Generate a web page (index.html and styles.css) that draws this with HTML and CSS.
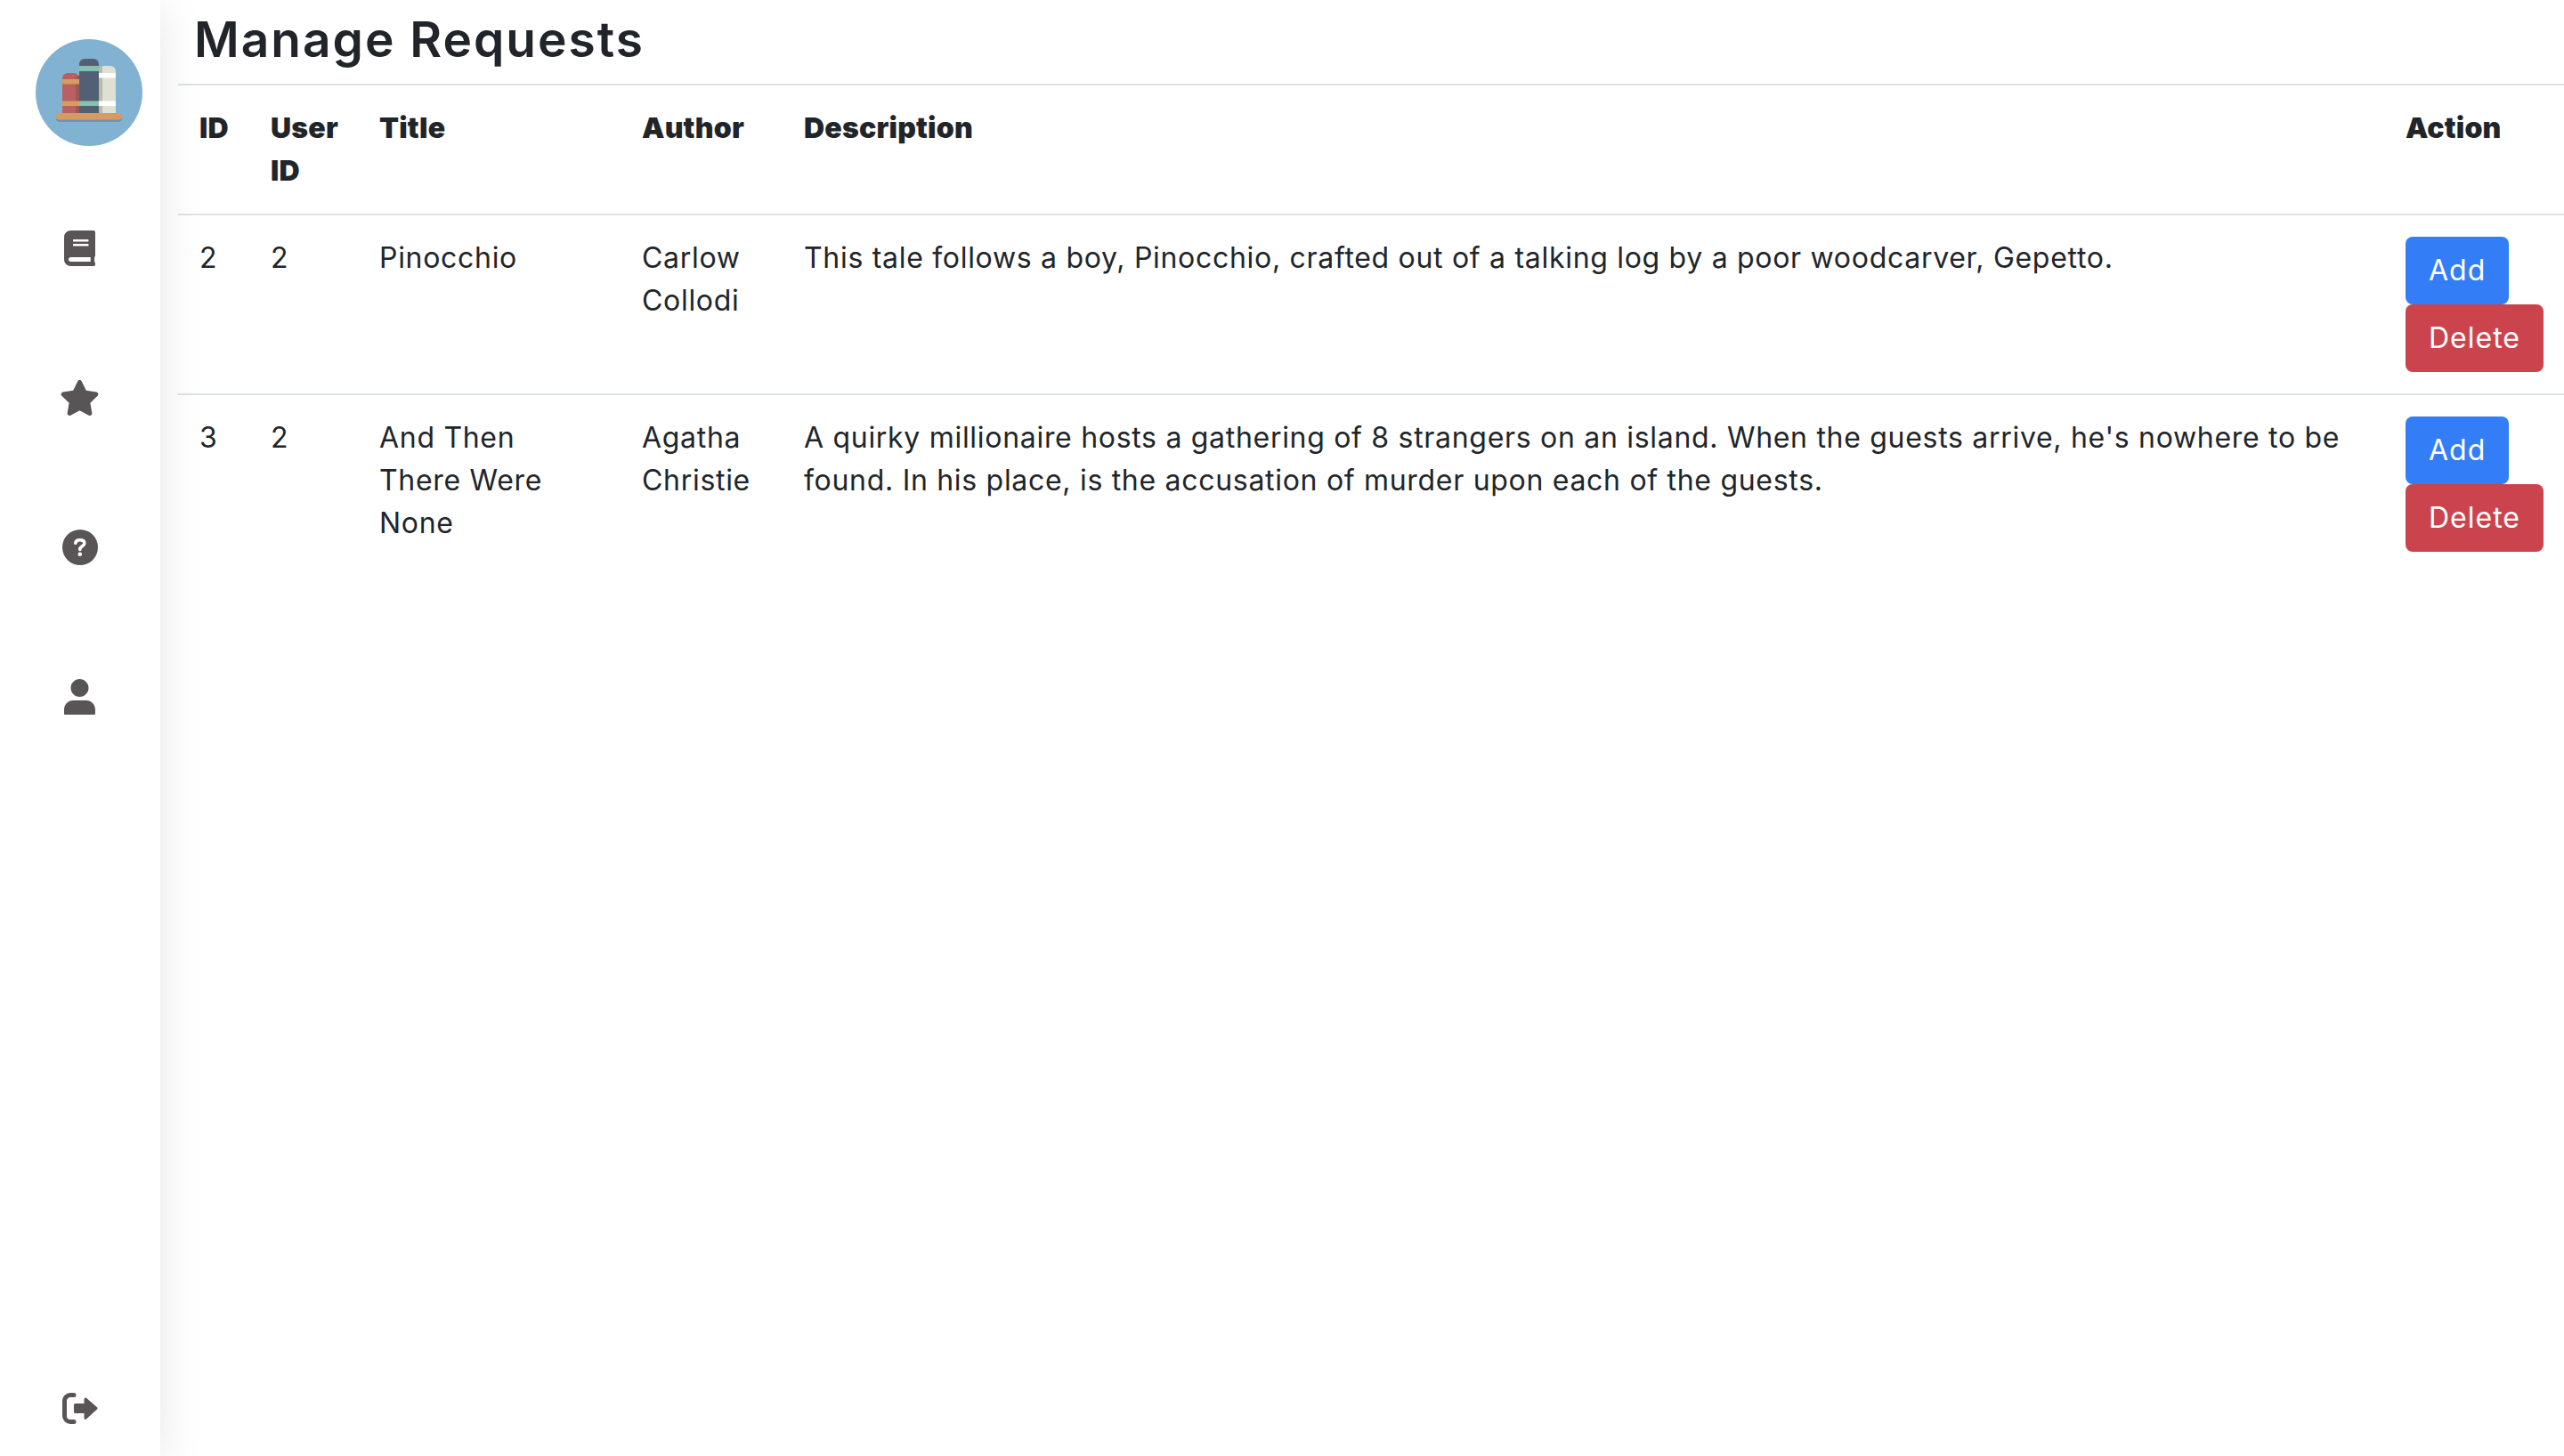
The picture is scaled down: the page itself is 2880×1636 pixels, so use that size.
FILE: index.html
```html
<!DOCTYPE html>
<html lang="en">
<head>
    <meta charset="UTF-8">
    <title>Manage Requests</title>
    <link rel="stylesheet" href="styles.css">
</head>
<body>
<div class="page">
    <nav class="sidebar">
        <svg class="logo" viewBox="0 0 120 120" aria-label="Library logo">
            <circle cx="60" cy="60" r="60" fill="#82b2d2"/>
            <g transform="translate(0 -1)">
                <rect x="23" y="86" width="74" height="8" rx="4" fill="#6e94b4"/>
                <path d="M30 84V45a6 6 0 0 1 6-6h7a6 6 0 0 1 6 6v39z" fill="#b96060"/>
                <rect x="45" y="42" width="4" height="42" fill="#9c5a56"/>
                <rect x="30" y="46" width="19" height="5.5" fill="#d69c63"/>
                <rect x="30" y="70.500" width="19" height="5.500" fill="#d69c63"/>
                <path d="M49 84V29a6 6 0 0 1 6-6h10a6 6 0 0 1 6 6v55z" fill="#525f74"/>
                <rect x="49" y="31" width="22" height="6" fill="#88c0ae"/>
                <rect x="49" y="70.500" width="22" height="5.500" fill="#88c0ae"/>
                <path d="M71 84V37a6 6 0 0 1 6-6h7a6 6 0 0 1 6 6v47z" fill="#dfe0d2"/>
                <path d="M71 84V37a6 6 0 0 1 4-5v52z" fill="#b9b9ac"/>
                <rect x="71" y="39" width="19" height="5.500" fill="#fff"/>
                <rect x="71" y="70.500" width="19" height="5.500" fill="#fff"/>
                <rect x="23" y="84" width="74" height="7.500" rx="3.500" fill="#d69a63"/>
            </g>
        </svg>
        <a class="nav-link" href="#">
            <svg class="icon" viewBox="0 0 448 512"><path d="M448 360V24c0-13.300-10.700-24-24-24H96C43 0 0 43 0 96v320c0 53 43 96 96 96h328c13.300 0 24-10.700 24-24v-16c0-7.500-3.500-14.300-8.900-18.700-4.200-15.400-4.200-59.300 0-74.700 5.400-4.300 8.900-11.100 8.900-18.600zM128 134c0-3.300 2.700-6 6-6h212c3.300 0 6 2.700 6 6v20c0 3.300-2.700 6-6 6H134c-3.300 0-6-2.700-6-6v-20zm0 64c0-3.300 2.700-6 6-6h212c3.300 0 6 2.700 6 6v20c0 3.300-2.700 6-6 6H134c-3.300 0-6-2.700-6-6v-20zm253.400 250H96c-17.700 0-32-14.300-32-32 0-17.600 14.400-32 32-32h285.400c-1.900 17.100-1.900 46.900 0 64z"/></svg>
        </a>
        <a class="nav-link" href="#">
            <svg class="icon" viewBox="0 0 576 512"><path d="M259.300 17.800L194 150.200 47.900 171.500c-26.200 3.800-36.700 36.100-17.700 54.600l105.700 103-25 145.500c-4.500 26.300 23.200 46 46.400 33.700L288 439.600l130.700 68.700c23.200 12.200 50.900-7.400 46.400-33.700l-25-145.500 105.700-103c19-18.500 8.500-50.800-17.700-54.600L382 150.200 316.700 17.800c-11.700-23.600-45.600-23.900-57.400 0z"/></svg>
        </a>
        <a class="nav-link" href="#">
            <svg class="icon" viewBox="0 0 40 40">
                <circle cx="20" cy="20" r="20"/>
                <path class="icon-cut" d="M14.800 15.200c.3-2.500 2.400-3.400 5-3.400 3 0 5 1.300 5 3.600 0 3.400-5 3.200-5 6.600v.5"/>
                <circle class="icon-dot" cx="19.800" cy="27.800" r="2.300"/>
            </svg>
        </a>
        <a class="nav-link" href="#">
            <svg class="icon" viewBox="0 0 448 512"><path d="M224 256c70.700 0 128-57.300 128-128S294.700 0 224 0 96 57.300 96 128s57.300 128 128 128zM0 500V440C0 365 60 307 130 307H318C388 307 448 365 448 440V500a12 12 0 0 1-12 12H12a12 12 0 0 1-12-12z"/></svg>
        </a>
        <a class="nav-link logout" href="#">
            <svg class="icon icon-logout" viewBox="0 0 40 35">
                <path class="icon-line" d="M13 2.500H9A6.500 6.500 0 0 0 2.500 9v17A6.500 6.500 0 0 0 9 32.500h4"/>
                <path class="icon-arrow" d="M14.500 13.500H26V7L38 17.500 26 28.500V21.500H14.500z"/>
            </svg>
        </a>
    </nav>

    <main class="content">
        <h1 class="page-title">Manage Requests</h1>
        <table class="requests">
            <colgroup>
                <col class="col-id">
                <col class="col-user">
                <col class="col-title">
                <col class="col-author">
                <col class="col-desc">
                <col class="col-action">
            </colgroup>
            <thead>
                <tr>
                    <th>ID</th>
                    <th>User ID</th>
                    <th>Title</th>
                    <th>Author</th>
                    <th>Description</th>
                    <th>Action</th>
                </tr>
            </thead>
            <tbody>
                <tr>
                    <td>2</td>
                    <td>2</td>
                    <td>Pinocchio</td>
                    <td>Carlow Collodi</td>
                    <td>This tale follows a boy, Pinocchio, crafted out of a talking log by a poor woodcarver, Gepetto.</td>
                    <td>
                        <button class="btn btn-add">Add</button>
                        <button class="btn btn-delete">Delete</button>
                    </td>
                </tr>
                <tr>
                    <td>3</td>
                    <td>2</td>
                    <td>And Then There Were None</td>
                    <td>Agatha Christie</td>
                    <td>A quirky millionaire hosts a gathering of 8 strangers on an island. When the guests arrive, he's nowhere to be found. In his place, is the accusation of murder upon each of the guests.</td>
                    <td>
                        <button class="btn btn-add">Add</button>
                        <button class="btn btn-delete">Delete</button>
                    </td>
                </tr>
            </tbody>
        </table>
    </main>
</div>
</body>
</html>
```

FILE: styles.css
```css
html, body {
    height: 100%;
}
body {
    font-family: Inter, "Liberation Sans", sans-serif;
    font-size: 32px;
    line-height: 48px;
    color: #212529;
    background-color: #fff;
    margin: 0;
}
.page {
    display: flex;
    height: 100%;
}
.sidebar {
    flex: 0 0 180px;
    display: flex;
    flex-direction: column;
    align-items: center;
    padding: 44px 0 36px;
    box-sizing: border-box;
    background-color: #fff;
    box-shadow: 0 8px 48px rgba(0,0,0,0.1);
    position: relative;
}
.logo {
    width: 120px;
    height: 120px;
    margin: 0 0 95px 20px;
    display: block;
}
.nav-link {
    display: block;
    height: 40px;
    margin: 0 1px 128px 0;
    color: #595556;
}
.nav-link.logout {
    height: 35px;
    margin: auto 0 0 0;
}
.icon {
    display: block;
    height: 40px;
    fill: currentColor;
}
.icon-logout {
    height: 35px;
}
.icon-cut {
    fill: none;
    stroke: #fff;
    stroke-width: 3.6;
    stroke-linecap: round;
}
.icon-dot {
    fill: #fff;
}
.icon-line {
    fill: none;
    stroke: currentColor;
    stroke-width: 5;
    stroke-linecap: round;
}
.icon-arrow {
    stroke: currentColor;
    stroke-width: 3;
    stroke-linejoin: round;
}
.content {
    flex: 1;
    padding: 0 0 0 20px;
    min-width: 0;
}
.page-title {
    font-size: 55px;
    font-weight: 600;
    line-height: 62px;
    letter-spacing: 2px;
    margin: 13px 0 19px 18px;
}
.requests {
    width: 2680px;
    border-collapse: collapse;
    table-layout: fixed;
    border-top: 2px solid #dee2e6;
}
.col-id { width: 80px; }
.col-user { width: 122px; }
.col-title { width: 295px; }
.col-author { width: 182px; }
.col-desc { width: 1799px; }
.col-action { width: 202px; }
.requests th, .requests td {
    padding: 24px;
    text-align: left;
    vertical-align: top;
    border-bottom: 2px solid #dee2e6;
}
.requests th {
    font-weight: 900;
    letter-spacing: 0.200px;
}
.requests tbody tr:last-child td {
    border-bottom: none;
}
.requests td {
    letter-spacing: 0.700px;
}
.btn {
    display: block;
    font-family: inherit;
    font-size: 32px;
    line-height: 48px;
    letter-spacing: 1px;
    color: #fff;
    padding: 12px 24px;
    border: 2px solid transparent;
    border-radius: 8px;
    cursor: pointer;
}
.btn-add {
    background-color: #337df6;
}
.btn-delete {
    background-color: #cb444d;
}
```
